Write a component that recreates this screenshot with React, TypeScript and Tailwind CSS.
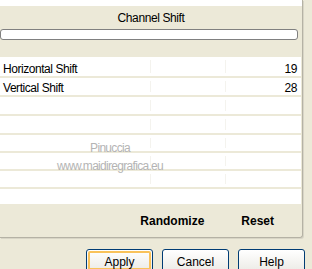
import React from "react";

const rowHeights = [19, 17, 17, 17, 16, 16, 16];

const rows: { label?: string; value?: string }[] = [
  { label: "Horizontal Shift", value: "19" },
  { label: "Vertical Shift", value: "28" },
  {},
  {},
  {},
  {},
  {},
];

function XpButton({ children, focused }: { children: React.ReactNode; focused?: boolean }) {
  return (
    <div className="w-[67px] h-[23px] rounded-[3px] border border-[#003c74] bg-gradient-to-b from-white to-[#ecebe6] p-[1px]">
      <div
        className={
          focused
            ? "h-full rounded-[2px] border-2 border-[#f9c25a] flex items-center justify-center pt-[2px]"
            : "h-full rounded-[2px] flex items-center justify-center pt-[2px]"
        }
      >
        <span className="text-[12px] text-black leading-none">{children}</span>
      </div>
    </div>
  );
}

export default function App() {
  return (
    <div
      className="w-[312px] h-[269px] overflow-hidden bg-[#ece9d8] text-black"
      style={{ fontFamily: '"Liberation Sans", Arial, sans-serif' }}
    >
      <div className="w-[303px] h-[238px] border-r border-b border-[#b5b2a5] rounded-br-[3px] shadow-[1px_1px_0_#d8d5c6] flex flex-col relative">
        <div className="h-[6px] bg-white" />
        <div className="h-[23px] flex items-center justify-center text-[12px] tracking-[-0.4px] pt-[1px]">Channel Shift</div>
        <div className="h-[11px] mr-[4px] rounded-[3px] border border-[#808080] bg-white" />
        <div className="h-[17px]" />
        <div className="flex flex-col mr-[1px]">
          {rows.map((r, i) => (
            <div
              key={i}
              className="bg-white border-b-2 border-[#ece9d8] flex items-end pb-[1px] px-[3px] text-[12px] tracking-[-0.45px] relative"
              style={{ height: rowHeights[i] + 2 }}
            >
              <span className="flex-1 leading-none">{r.label}</span>
              <span className="leading-none pr-[1px]">{r.value}</span>
              <span className="absolute left-[150px] top-[3px] bottom-[3px] w-px bg-[#f4f3ee]" />
              <span className="absolute left-[225px] top-[3px] bottom-[3px] w-px bg-[#f4f3ee]" />
            </div>
          ))}
          <div className="h-[15px] bg-white" />
        </div>
        <div className="flex-1 flex items-center justify-end font-bold text-[12px] pt-[1px]">
          <span className="mr-[37px]">Randomize</span>
          <span className="mr-[28px]">Reset</span>
        </div>
        <div className="absolute left-[55px] top-[139px] w-[110px] flex flex-col items-center text-[#b4b4b4] leading-[18px] text-[12px] tracking-[-0.7px] pointer-events-none">
          <span>Pinuccia</span>
          <span>www.maidiregrafica.eu</span>
        </div>
      </div>
      <div className="flex justify-end gap-[9px] pr-[7px] pt-[11px]">
        <XpButton focused>Apply</XpButton>
        <XpButton>Cancel</XpButton>
        <XpButton>Help</XpButton>
      </div>
    </div>
  );
}
